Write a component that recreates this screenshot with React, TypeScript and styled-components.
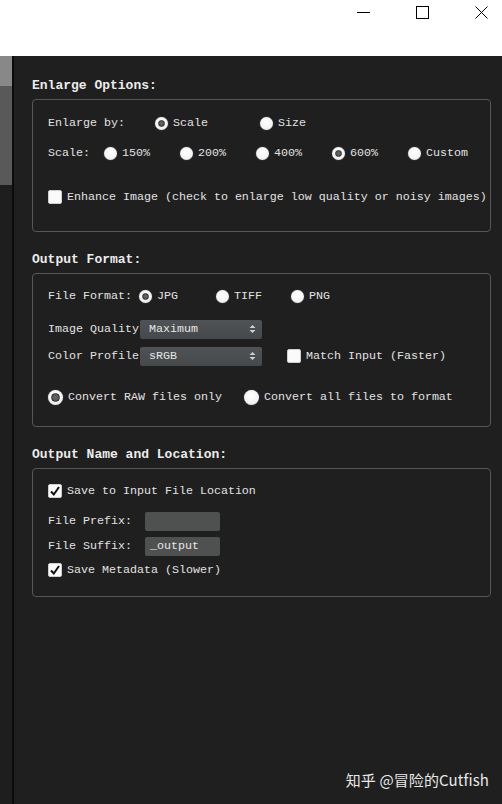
import React from "react";
import styled, { createGlobalStyle, css } from "styled-components";

const Global = createGlobalStyle`
  html, body { margin: 0; padding: 0; background: #1f1f1f; }
  body { width: 502px; height: 804px; overflow: hidden; }
  #root { height: 804px; }
`;

const MONO = `"Liberation Mono", "DejaVu Sans Mono", monospace`;

const Page = styled.div`
  width: 502px;
  height: 804px;
  display: flex;
  flex-direction: column;
  font-family: ${MONO};
  color: #e2e2e2;
`;

const TitleBar = styled.div`
  height: 56px;
  box-sizing: border-box;
  background: #ffffff;
  display: flex;
  justify-content: flex-end;
  align-items: flex-start;
  gap: 46px;
  padding: 6px 14px 0 0;
  flex-shrink: 0;
`;

const WinButton = styled.div`
  width: 13px;
  height: 13px;
  display: flex;
  align-items: flex-start;
  justify-content: center;
`;

const Body = styled.div`
  flex: 1;
  display: flex;
  position: relative;
`;

const Sidebar = styled.div`
  width: 12px;
  border-right: 2px solid #0b0b0b;
  display: flex;
  flex-direction: column;
  background: #1e1e1e;
`;

const SideSeg = styled.div<{ $h: number; $c: string }>`
  height: ${(p) => p.$h}px;
  background: ${(p) => p.$c};
`;

const Main = styled.div`
  flex: 1;
  background: #1f1f1f;
  padding: 22px 11px 0 18px;
  display: flex;
  flex-direction: column;
`;

const Heading = styled.div<{ $mt?: number }>`
  font-family: ${MONO};
  font-weight: bold;
  font-size: 13px;
  line-height: 16px;
  color: #ececec;
  margin-top: ${(p) => p.$mt ?? 0}px;
  margin-bottom: 5px;
`;

const Group = styled.div<{ $pt: number; $pb: number }>`
  border: 1px solid #575757;
  border-radius: 4px;
  padding: ${(p) => p.$pt}px 0 ${(p) => p.$pb}px 15px;
  display: flex;
  flex-direction: column;
`;

const Row = styled.div<{ $mt?: number }>`
  height: 20px;
  display: flex;
  align-items: center;
  margin-top: ${(p) => p.$mt ?? 0}px;
  font-size: 11.67px;
  white-space: nowrap;
`;

const Label = styled.span<{ $w?: number }>`
  display: inline-block;
  width: ${(p) => (p.$w ? `${p.$w}px` : "auto")};
  flex-shrink: 0;
`;

const Option = styled.label<{ $w?: number }>`
  display: inline-flex;
  align-items: center;
  width: ${(p) => (p.$w ? `${p.$w}px` : "auto")};
  flex-shrink: 0;
`;

const RadioDot = styled.span<{ $on?: boolean; $size?: number }>`
  width: ${(p) => p.$size ?? 13}px;
  height: ${(p) => p.$size ?? 13}px;
  border-radius: 50%;
  box-sizing: border-box;
  background: radial-gradient(circle at 50% 40%, #ffffff 0%, #f4f4f4 60%, #d6d6d6 100%);
  box-shadow: 0 0 1px rgba(255, 255, 255, 0.6);
  margin-right: 5px;
  display: inline-flex;
  align-items: center;
  justify-content: center;
  flex-shrink: 0;
  ${(p) =>
    p.$on &&
    css`
      &::after {
        content: "";
        width: ${(p.$size ?? 13) - 6}px;
        height: ${(p.$size ?? 13) - 6}px;
        border-radius: 50%;
        background: radial-gradient(circle at 50% 45%, #6a6a6a, #444);
        border: 1px solid #333;
        box-sizing: border-box;
      }
    `}
`;

const Box = styled.span`
  width: 14px;
  height: 14px;
  border-radius: 2px;
  background: #fafafa;
  border: 1px solid #cfcfcf;
  box-sizing: border-box;
  margin-right: 5px;
  display: inline-flex;
  align-items: center;
  justify-content: center;
  flex-shrink: 0;
`;

const Select = styled.div<{ $mr?: number }>`
  width: 122px;
  height: 19px;
  box-sizing: border-box;
  background: linear-gradient(#505355, #46494b);
  border-radius: 2px;
  padding: 0 6px 0 9px;
  display: flex;
  align-items: center;
  justify-content: space-between;
  color: #e6e6e6;
  margin-right: ${(p) => p.$mr ?? 0}px;
  flex-shrink: 0;
`;

const TextField = styled.div`
  width: 75px;
  height: 19px;
  box-sizing: border-box;
  background: #4f5050;
  border-radius: 2px;
  padding: 0 5px;
  display: flex;
  align-items: center;
  color: #e6e6e6;
`;

const Watermark = styled.div`
  position: absolute;
  right: 13px;
  bottom: 14px;
  font-family: "Noto Sans CJK SC", "Noto Sans", sans-serif;
  font-size: 15px;
  color: #e8e8e8;
  letter-spacing: 0.1px;
`;

const Check = () => (
  <svg width="12" height="12" viewBox="0 0 12 12">
    <path d="M2 6.5 L4.8 9.5 L10 2" fill="none" stroke="#111" strokeWidth="2" />
  </svg>
);

const Arrows = () => (
  <svg width="7" height="10" viewBox="0 0 7 10">
    <path d="M0.5 4 L3.5 1 L6.5 4 Z M0.5 6 L3.5 9 L6.5 6 Z" fill="#cfcfcf" />
  </svg>
);

const Radio = ({ on, label, w, size }: { on?: boolean; label: string; w?: number; size?: number }) => (
  <Option $w={w}>
    <RadioDot $on={on} $size={size} />
    {label}
  </Option>
);

const CheckBox = ({ on, label }: { on?: boolean; label: string }) => (
  <Option>
    <Box>{on && <Check />}</Box>
    {label}
  </Option>
);

export default function App() {
  return (
    <Page>
      <Global />
      <TitleBar>
        <WinButton>
          <svg width="13" height="13" viewBox="0 0 13 13">
            <path d="M0 6.5 H13" stroke="#000" strokeWidth="1" />
          </svg>
        </WinButton>
        <WinButton>
          <svg width="13" height="13" viewBox="0 0 13 13">
            <rect x="0.5" y="0.5" width="12" height="12" fill="none" stroke="#000" strokeWidth="1" />
          </svg>
        </WinButton>
        <WinButton>
          <svg width="13" height="13" viewBox="0 0 13 13">
            <path d="M0.5 0.5 L12.5 12.5 M12.5 0.5 L0.5 12.5" stroke="#000" strokeWidth="1" />
          </svg>
        </WinButton>
      </TitleBar>
      <Body>
        <Sidebar>
          <SideSeg $h={30} $c="#888888" />
          <SideSeg $h={99} $c="#595959" />
        </Sidebar>
        <Main>
          <Heading>Enlarge Options:</Heading>
          <Group $pt={13} $pb={24}>
            <Row>
              <Label $w={107}>Enlarge by:</Label>
              <Radio on label="Scale" w={105} />
              <Radio label="Size" />
            </Row>
            <Row $mt={10}>
              <Label $w={56}>Scale:</Label>
              <Radio label="150%" w={76} />
              <Radio label="200%" w={76} />
              <Radio label="400%" w={76} />
              <Radio on label="600%" w={76} />
              <Radio label="Custom" />
            </Row>
            <Row $mt={24}>
              <CheckBox label="Enhance Image (check to enlarge low quality or noisy images)" />
            </Row>
          </Group>

          <Heading $mt={20}>Output Format:</Heading>
          <Group $pt={12} $pb={19}>
            <Row>
              <Label $w={91}>File Format:</Label>
              <Radio on label="JPG" w={77} />
              <Radio label="TIFF" w={75} />
              <Radio label="PNG" />
            </Row>
            <Row $mt={13}>
              <Label $w={92}>Image Quality</Label>
              <Select>
                Maximum
                <Arrows />
              </Select>
            </Row>
            <Row $mt={7}>
              <Label $w={92}>Color Profile</Label>
              <Select $mr={25}>
                sRGB
                <Arrows />
              </Select>
              <CheckBox label="Match Input (Faster)" />
            </Row>
            <Row $mt={21}>
              <Radio on size={15} label="Convert RAW files only" w={196} />
              <Radio size={15} label="Convert all files to format" />
            </Row>
          </Group>

          <Heading $mt={20}>Output Name and Location:</Heading>
          <Group $pt={12} $pb={16}>
            <Row>
              <CheckBox on label="Save to Input File Location" />
            </Row>
            <Row $mt={10}>
              <Label $w={97}>File Prefix:</Label>
              <TextField />
            </Row>
            <Row $mt={5}>
              <Label $w={97}>File Suffix:</Label>
              <TextField>_output</TextField>
            </Row>
            <Row $mt={4}>
              <CheckBox on label="Save Metadata (Slower)" />
            </Row>
          </Group>
        </Main>
        <Watermark>知乎 @冒险的Cutfish</Watermark>
      </Body>
    </Page>
  );
}
